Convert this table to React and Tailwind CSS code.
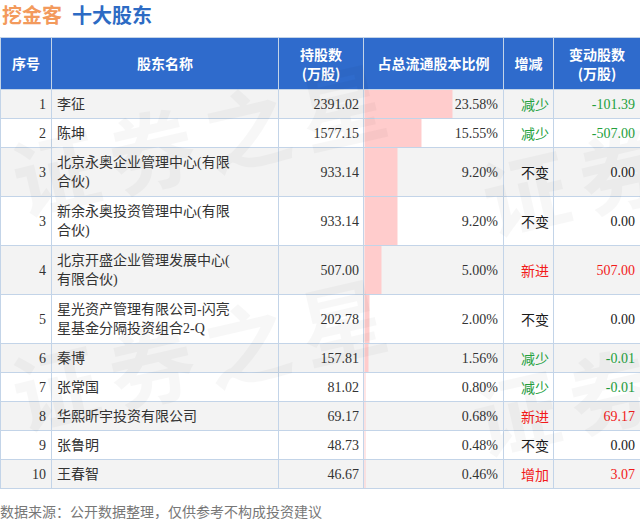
import React from 'react';

const rows = [
  { no: '1', name: ['李征'], hold: '2391.02', pct: 23.58, dir: '减少', chg: '-101.39' },
  { no: '2', name: ['陈坤'], hold: '1577.15', pct: 15.55, dir: '减少', chg: '-507.00' },
  { no: '3', name: ['北京永奥企业管理中心(有限', '合伙)'], hold: '933.14', pct: 9.2, dir: '不变', chg: '0.00' },
  { no: '3', name: ['新余永奥投资管理中心(有限', '合伙)'], hold: '933.14', pct: 9.2, dir: '不变', chg: '0.00' },
  { no: '4', name: ['北京开盛企业管理发展中心(', '有限合伙)'], hold: '507.00', pct: 5.0, dir: '新进', chg: '507.00' },
  { no: '5', name: ['星光资产管理有限公司-闪亮', '星基金分隔投资组合2-Q'], hold: '202.78', pct: 2.0, dir: '不变', chg: '0.00' },
  { no: '6', name: ['秦博'], hold: '157.81', pct: 1.56, dir: '减少', chg: '-0.01' },
  { no: '7', name: ['张常国'], hold: '81.02', pct: 0.8, dir: '减少', chg: '-0.01' },
  { no: '8', name: ['华熙昕宇投资有限公司'], hold: '69.17', pct: 0.68, dir: '新进', chg: '69.17' },
  { no: '9', name: ['张鲁明'], hold: '48.73', pct: 0.48, dir: '不变', chg: '0.00' },
  { no: '10', name: ['王春智'], hold: '46.67', pct: 0.46, dir: '增加', chg: '3.07' },
];

const tone = {
  '减少': 'text-[#23a03c]',
  '不变': 'text-[#1a1a1a]',
  '新进': 'text-[#f21a1a]',
  '增加': 'text-[#f21a1a]',
};

const barWidth = (pct) => Math.max(1, pct * 3.825 - 2.2);

function Watermark({ className }) {
  return (
    <span className={"pointer-events-none absolute select-none whitespace-nowrap text-[86px] font-bold leading-none tracking-[12px] text-black/[0.03] rotate-[-13deg] " + className}>
      证券之星
    </span>
  );
}

export default function App() {
  return (
    <div className="relative w-[640px] h-[519px] overflow-hidden bg-white font-['Liberation_Serif','Noto_Sans_CJK_SC',serif] text-[14px] text-[#333]">
      <div className="h-[37px] pl-[2px] pt-[3px] flex gap-[10px] font-['Noto_Sans_CJK_SC',sans-serif] text-[20px] font-bold leading-[24px]">
        <span className="text-[#f39a5c]">挖金客</span>
        <span className="text-[#2d6bc4]">十大股东</span>
      </div>

      <table className="w-[640px] table-fixed border-collapse border border-[#c3d4e8]">
        <colgroup>
          <col className="w-[51px]" />
          <col className="w-[227px]" />
          <col className="w-[85px]" />
          <col className="w-[140px]" />
          <col className="w-[50px]" />
          <col className="w-[87px]" />
        </colgroup>
        <thead>
          <tr className="h-[52px] bg-[#2f6bcc] text-white font-['Noto_Sans_CJK_SC',sans-serif] text-[14px] font-bold leading-[19px]">
            <th className="border border-[#c3d4e8] font-bold">序号</th>
            <th className="border border-[#c3d4e8] font-bold">股东名称</th>
            <th className="border border-[#c3d4e8] font-bold">持股数<br />(万股)</th>
            <th className="border border-[#c3d4e8] font-bold">占总流通股本比例</th>
            <th className="border border-[#c3d4e8] font-bold">增减</th>
            <th className="border border-[#c3d4e8] font-bold">变动股数<br />(万股)</th>
          </tr>
        </thead>
        <tbody>
          {rows.map((r, i) => (
            <tr key={i} className={(r.name.length > 1 ? 'h-[49px] ' : 'h-[29px] ') + (i % 2 === 0 ? 'bg-[#f3f3f3]' : 'bg-white')}>
              <td className="border border-[#c3d4e8] pr-[5px] text-right">{r.no}</td>
              <td className="border border-[#c3d4e8] pl-[5px] leading-[19px]">
                {r.name.map((l, k) => (
                  <div key={k}>{l}</div>
                ))}
              </td>
              <td className="border border-[#c3d4e8] pr-[4px] text-right">{r.hold}</td>
              <td
                className="border border-[#c3d4e8] pr-[5px] text-right"
                style={{ background: `linear-gradient(to right, #ffcccc ${barWidth(r.pct)}px, transparent ${barWidth(r.pct)}px)` }}
              >
                {r.pct.toFixed(2)}%
              </td>
              <td className={'border border-[#c3d4e8] pr-[4px] pt-[3px] text-right ' + tone[r.dir]}>{r.dir}</td>
              <td className={'border border-[#c3d4e8] pr-[5px] text-right ' + tone[r.dir]}>{r.chg}</td>
            </tr>
          ))}
        </tbody>
      </table>

      <div className="mt-[12px] leading-[20px] text-[14px] text-[#777] font-['Noto_Sans_CJK_SC',sans-serif]">
        数据来源：公开数据整理，仅供参考不构成投资建议
      </div>

      <Watermark className="left-[10px] top-[100px]" />
      <Watermark className="left-[10px] top-[315px]" />
      <Watermark className="left-[480px] top-[120px]" />
      <Watermark className="left-[470px] top-[340px]" />
    </div>
  );
}
